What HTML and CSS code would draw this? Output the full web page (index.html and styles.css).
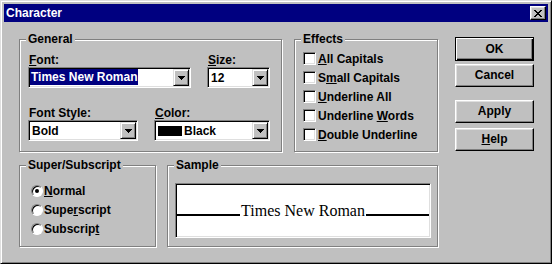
FILE: index.html
```html
<!DOCTYPE html>
<html lang="en">
<head>
    <meta charset="UTF-8">
    <title>Character</title>
    <link rel="stylesheet" href="styles.css">
</head>
<body>

    <div class="window">

        <div class="titlebar">
            <span class="title">Character</span>
            <span class="close">
                <svg width="8" height="7" viewBox="0 0 8 7" shape-rendering="crispEdges">
                    <path d="M0 0h2v1H0zM6 0h2v1H6zM1 1h2v1H1zM5 1h2v1H5zM2 2h4v1H2zM3 3h2v1H3zM2 4h4v1H2zM1 5h2v1H1zM5 5h2v1H5zM0 6h2v1H0zM6 6h2v1H6z" fill="#000"/>
                </svg>
            </span>
        </div>

        <div class="body">

            <div class="groups">

                <div class="row">
                    <div class="group general">
                        <span class="group-title">General</span>
                        <div class="fields">
                            <div class="field-row">
                                <div class="field">
                                    <label><u>F</u>ont:</label>
                                    <div class="combo font-combo">
                                        <span class="value"><span class="selected">Times New Roman</span></span>
                                        <span class="drop"><svg width="7" height="4" viewBox="0 0 7 4" shape-rendering="crispEdges"><path d="M0 0h7v1H0zM1 1h5v1H1zM2 2h3v1H2zM3 3h1v1H3z"/></svg></span>
                                    </div>
                                </div>
                                <div class="field">
                                    <label><u>S</u>ize:</label>
                                    <div class="combo size-combo">
                                        <span class="value">12</span>
                                        <span class="drop"><svg width="7" height="4" viewBox="0 0 7 4" shape-rendering="crispEdges"><path d="M0 0h7v1H0zM1 1h5v1H1zM2 2h3v1H2zM3 3h1v1H3z"/></svg></span>
                                    </div>
                                </div>
                            </div>
                            <div class="field-row">
                                <div class="field">
                                    <label>Font Style:</label>
                                    <div class="combo style-combo">
                                        <span class="value">Bold</span>
                                        <span class="drop"><svg width="7" height="4" viewBox="0 0 7 4" shape-rendering="crispEdges"><path d="M0 0h7v1H0zM1 1h5v1H1zM2 2h3v1H2zM3 3h1v1H3z"/></svg></span>
                                    </div>
                                </div>
                                <div class="field">
                                    <label><u>C</u>olor:</label>
                                    <div class="combo color-combo">
                                        <span class="value"><span class="swatch"></span>Black</span>
                                        <span class="drop"><svg width="7" height="4" viewBox="0 0 7 4" shape-rendering="crispEdges"><path d="M0 0h7v1H0zM1 1h5v1H1zM2 2h3v1H2zM3 3h1v1H3z"/></svg></span>
                                    </div>
                                </div>
                            </div>
                        </div>
                    </div>

                    <div class="group effects">
                        <span class="group-title">Effects</span>
                        <div class="checks">
                            <div class="check-row"><span class="checkbox"></span><span><u>A</u>ll Capitals</span></div>
                            <div class="check-row"><span class="checkbox"></span><span>S<u>m</u>all Capitals</span></div>
                            <div class="check-row"><span class="checkbox"></span><span><u>U</u>nderline All</span></div>
                            <div class="check-row"><span class="checkbox"></span><span>Underline <u>W</u>ords</span></div>
                            <div class="check-row"><span class="checkbox"></span><span><u>D</u>ouble Underline</span></div>
                        </div>
                    </div>
                </div>

                <div class="row">
                    <div class="group script">
                        <span class="group-title">Super/Subscript</span>
                        <div class="options">
                            <div class="option"><span class="radio checked"></span><span><u>N</u>ormal</span></div>
                            <div class="option"><span class="radio"></span><span>Supe<u>r</u>script</span></div>
                            <div class="option"><span class="radio"></span><span>Subscrip<u>t</u></span></div>
                        </div>
                    </div>

                    <div class="group sample">
                        <span class="group-title">Sample</span>
                        <div class="sample-box">
                            <span class="sample-line"></span>
                            <span class="sample-text">Times New Roman</span>
                            <span class="sample-line"></span>
                        </div>
                    </div>
                </div>

            </div>

            <div class="buttons">
                <div class="btn btn-ok">OK</div>
                <div class="btn btn-cancel">Cancel</div>
                <div class="btn btn-apply">Apply</div>
                <div class="btn btn-help"><u>H</u>elp</div>
            </div>

        </div>
    </div>

</body>
</html>
```

FILE: styles.css
```css
body {
    margin: 0;
    font-family: "Liberation Sans", Arial, sans-serif;
    font-size: 12px;
    font-weight: bold;
    color: #000;
    background: #c0c0c0;
}

u {
    text-underline-offset: 1px;
}

/* fenêtre */
.window {
    width: 552px;
    height: 264px;
    box-sizing: border-box;
    background: #c0c0c0;
    border: 1px solid;
    border-color: #dfdfdf #000 #000 #dfdfdf;
    box-shadow: inset 1px 1px #fff, inset -1px -1px #808080;
    padding: 3px;
}

.titlebar {
    height: 18px;
    background: #000080;
    color: #fff;
    display: flex;
    align-items: center;
    justify-content: space-between;
    padding: 0 2px;
}

.title {
    line-height: 18px;
}

.close {
    width: 16px;
    height: 14px;
    box-sizing: border-box;
    background: #c0c0c0;
    border: 1px solid;
    border-color: #fff #000 #000 #fff;
    box-shadow: inset -1px -1px #808080, inset 1px 1px #dfdfdf;
    display: flex;
    align-items: center;
    justify-content: center;
}

.body {
    display: flex;
    padding: 15px 0 0 15px;
}

.groups {
    width: 419px;
    padding-top: 2px;
}

.row {
    display: flex;
}

.row + .row {
    margin-top: 13px;
}

/* cadres */
.group {
    box-sizing: border-box;
    border: 1px solid #808080;
    box-shadow: 1px 1px 0 #fff, inset 1px 1px 0 #fff;
}

.group-title {
    display: block;
    width: fit-content;
    margin: -8px 0 0 6px;
    padding: 0 2px;
    background: #c0c0c0;
    line-height: 14px;
}

.general {
    width: 263px;
    height: 113px;
    margin-right: 12px;
}

.effects {
    width: 144px;
    height: 113px;
}

.script {
    width: 137px;
    height: 82px;
    margin-right: 11px;
}

.sample {
    width: 271px;
    height: 82px;
}

/* General */
.fields {
    padding: 7px 0 0 8px;
}

.field-row {
    display: flex;
    gap: 16px;
}

.field-row + .field-row {
    margin-top: 18px;
}

.field label {
    display: block;
    line-height: 14px;
    padding-left: 1px;
}

.combo {
    height: 21px;
    box-sizing: border-box;
    display: flex;
    align-items: center;
    background: #fff;
    border: 1px solid;
    border-color: #808080 #fff #fff #808080;
    box-shadow: inset 1px 1px #000, inset -1px -1px #dfdfdf;
    padding: 1px;
}

.font-combo { width: 163px; }
.size-combo { width: 63px; }
.style-combo { width: 110px; }
.color-combo { width: 116px; }

.combo .value {
    flex: 1;
    display: flex;
    align-items: center;
    padding-left: 2px;
    line-height: 16px;
}

.font-combo .value {
    padding-left: 0;
    align-self: flex-start;
}

.selected {
    background: #000080;
    color: #fff;
    padding: 0 1px;
    line-height: 16px;
}

.swatch {
    width: 24px;
    height: 10px;
    background: #000;
    margin-right: 2px;
}

.drop {
    width: 16px;
    height: 17px;
    box-sizing: border-box;
    background: #c0c0c0;
    border: 1px solid;
    border-color: #dfdfdf #000 #000 #dfdfdf;
    box-shadow: inset 1px 1px #fff, inset -1px -1px #808080;
    display: flex;
    align-items: center;
    justify-content: center;
}

/* Effects */
.checks {
    margin-top: 3px;
    padding-left: 8px;
}

.check-row {
    display: flex;
    align-items: center;
    gap: 1px;
    height: 19px;
}

.checkbox {
    width: 13px;
    height: 13px;
    box-sizing: border-box;
    background: #fff;
    border: 1px solid;
    border-color: #808080 #fff #fff #808080;
    box-shadow: inset 1px 1px #000, inset -1px -1px #dfdfdf;
    margin-right: 1px;
}

/* Super/Subscript */
.options {
    margin-top: 9px;
    padding-left: 11px;
}

.option {
    display: flex;
    align-items: center;
    gap: 1px;
    height: 19px;
}

.radio {
    width: 12px;
    height: 12px;
    box-sizing: border-box;
    border-radius: 50%;
    background: #fff;
    border: 1px solid;
    border-color: #808080 #fff #fff #808080;
    box-shadow: inset 1px 1px #000;
    display: flex;
    align-items: center;
    justify-content: center;
}

.radio.checked::after {
    content: "";
    width: 4px;
    height: 4px;
    border-radius: 50%;
    background: #000;
}

/* Sample */
.sample-box {
    margin: 11px 0 0 7px;
    width: 256px;
    height: 55px;
    box-sizing: border-box;
    background: #fff;
    border: 1px solid;
    border-color: #808080 #fff #fff #808080;
    box-shadow: inset 1px 1px #000, inset -1px -1px #dfdfdf;
    padding: 19px 1px 0;
    display: flex;
    align-items: baseline;
}

.sample-line {
    flex: 1;
    height: 2px;
    background: #000;
}

.sample-text {
    font-family: "Liberation Serif", "Times New Roman", serif;
    font-weight: normal;
    font-size: 16px;
    line-height: 16px;
    padding: 0 1px;
}

/* boutons */
.buttons {
    display: flex;
    flex-direction: column;
    width: 79px;
    margin-left: 17px;
}

.btn {
    height: 23px;
    box-sizing: border-box;
    text-align: center;
    line-height: 21px;
    border: 1px solid;
    border-color: #fff #000 #000 #fff;
    box-shadow: inset -1px -1px #808080, inset 1px 1px #dfdfdf;
}

.btn-ok {
    height: 24px;
    line-height: 22px;
    border-color: #000;
    box-shadow: inset 1px 1px #fff, inset -1px -1px #000, inset -2px -2px #808080;
}

.btn-cancel { margin-top: 3px; }
.btn-apply { margin-top: 13px; }
.btn-help { margin-top: 5px; }
```
